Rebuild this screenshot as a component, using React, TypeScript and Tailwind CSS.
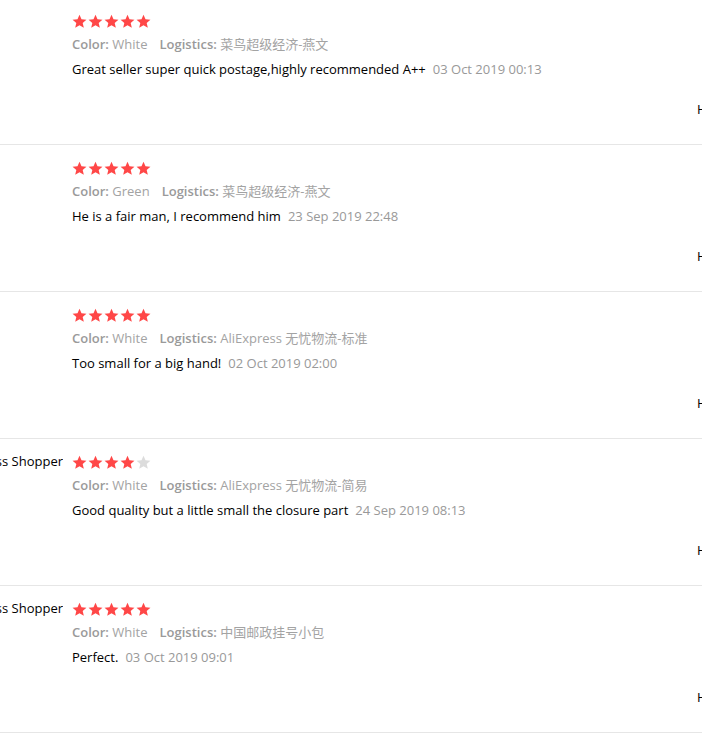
const reviews = [
  {
    name: "",
    stars: 5,
    color: "White",
    logistics: "菜鸟超级经济-燕文",
    text: "Great seller super quick postage,highly recommended A++",
    date: "03 Oct 2019 00:13",
  },
  {
    name: "",
    stars: 5,
    color: "Green",
    logistics: "菜鸟超级经济-燕文",
    text: "He is a fair man, I recommend him",
    date: "23 Sep 2019 22:48",
  },
  {
    name: "",
    stars: 5,
    color: "White",
    logistics: "AliExpress 无忧物流-标准",
    text: "Too small for a big hand!",
    date: "02 Oct 2019 02:00",
  },
  {
    name: "AliExpress Shopper",
    stars: 4,
    color: "White",
    logistics: "AliExpress 无忧物流-简易",
    text: "Good quality but a little small the closure part",
    date: "24 Sep 2019 08:13",
  },
  {
    name: "AliExpress Shopper",
    stars: 5,
    color: "White",
    logistics: "中国邮政挂号小包",
    text: "Perfect.",
    date: "03 Oct 2019 09:01",
  },
];

function Star({ on }: { on: boolean }) {
  return (
    <svg viewBox="0 0 24 24" className={on ? "w-[15px] h-[15px] fill-[#ff4747]" : "w-[15px] h-[15px] fill-[#dcdcdc]"}>
      <path d="M12 1l3.2 7.3 7.9.7-6 5.3 1.8 7.8L12 18l-6.9 4.1L6.9 14.3.9 9l7.9-.7z" />
    </svg>
  );
}

export default function App() {
  return (
    <div
      className="w-[702px] h-[737px] overflow-hidden bg-white text-[13px]"
      style={{ fontFamily: "'Open Sans', 'Noto Sans CJK SC', sans-serif" }}
    >
      <div className="-mt-[2px]">
        {reviews.map((r, i) => (
          <div key={i} className="flex border-b border-[#e6e6e6] h-[147px] pt-[14px]">
            <div className="w-[63px] flex justify-end overflow-hidden shrink-0">
              <span className="whitespace-nowrap text-[#000] leading-[17px]">{r.name}</span>
            </div>
            <div className="pl-[9px] flex-1 min-w-0">
              <div className="flex gap-[1px] h-[18px] items-center -ml-[0.5px]">
                {[0, 1, 2, 3, 4].map((s) => (
                  <Star key={s} on={s < r.stars} />
                ))}
              </div>
              <div className="mt-[3px] leading-[22px] text-[#999] whitespace-nowrap">
                <span className="font-semibold text-[#9a9a9a]">Color:</span> <span className="text-[#a3a3a3]">{r.color}</span>
                <span className="ml-[12px] font-semibold text-[#9a9a9a]">Logistics:</span>{" "}
                <span className="text-[#a3a3a3]">{r.logistics}</span>
              </div>
              <div className="mt-[3px] leading-[22px] whitespace-nowrap">
                <span className="text-[#000]">{r.text}</span>
                <span className="ml-[7px] text-[#999]">{r.date}</span>
              </div>
              <div className="mt-[18px] leading-[22px] whitespace-nowrap pl-[625px] text-[#000]">
                Helpful?
              </div>
            </div>
          </div>
        ))}
      </div>
    </div>
  );
}
